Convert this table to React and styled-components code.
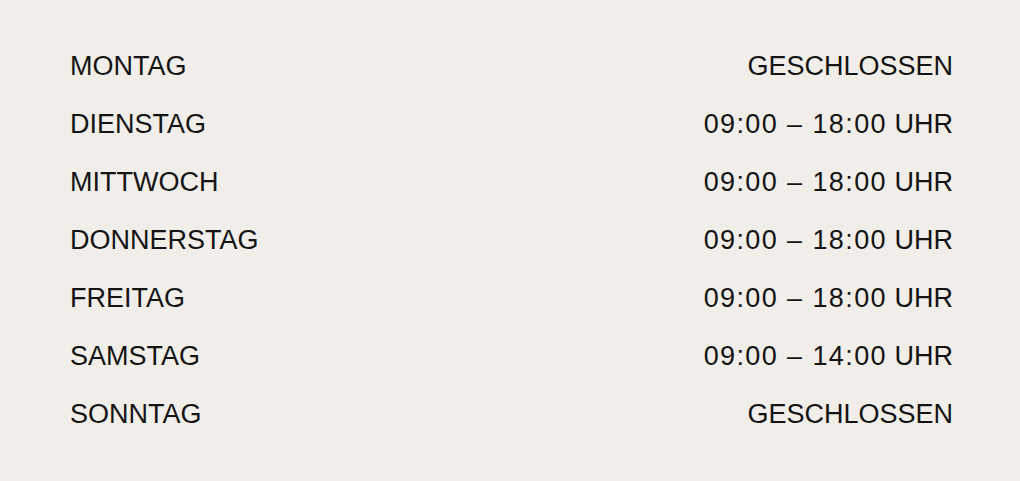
import React from "react"
import styled, { createGlobalStyle } from "styled-components"

const GlobalStyle = createGlobalStyle`
  html, body {
    margin: 0;
    padding: 0;
    background: #f1eeea;
  }
  body {
    font-family: "Liberation Sans", Arial, sans-serif;
    color: #141414;
  }
`

const Page = styled.div`
  min-height: 481px;
  box-sizing: border-box;
  padding: 37px 67px 0 70px;
`

const HoursList = styled.ul`
  list-style: none;
  margin: 0;
  padding: 0;
`

const Row = styled.li`
  display: flex;
  justify-content: space-between;
  align-items: center;
  height: 58px;
  font-size: 27px;
  line-height: 58px;
  text-transform: uppercase;
`

const Day = styled.span``

const Time = styled.span`
  text-align: right;
  white-space: nowrap;
`

// digits in the original face run a bit wider than Arial's
const Clock = styled.span`
  letter-spacing: 1.4px;
`

const hours = [
  { day: "Montag", closed: true },
  { day: "Dienstag", from: "09:00", to: "18:00" },
  { day: "Mittwoch", from: "09:00", to: "18:00" },
  { day: "Donnerstag", from: "09:00", to: "18:00" },
  { day: "Freitag", from: "09:00", to: "18:00" },
  { day: "Samstag", from: "09:00", to: "14:00" },
  { day: "Sonntag", closed: true },
]

const App = () => {
  return (
    <Page>
      <GlobalStyle />
      <HoursList>
        {hours.map(h => (
          <Row key={h.day}>
            <Day>{h.day}</Day>
            <Time>
              {h.closed ? (
                "Geschlossen"
              ) : (
                <>
                  <Clock>{`${h.from} – ${h.to}`}</Clock> Uhr
                </>
              )}
            </Time>
          </Row>
        ))}
      </HoursList>
    </Page>
  )
}

export default App
